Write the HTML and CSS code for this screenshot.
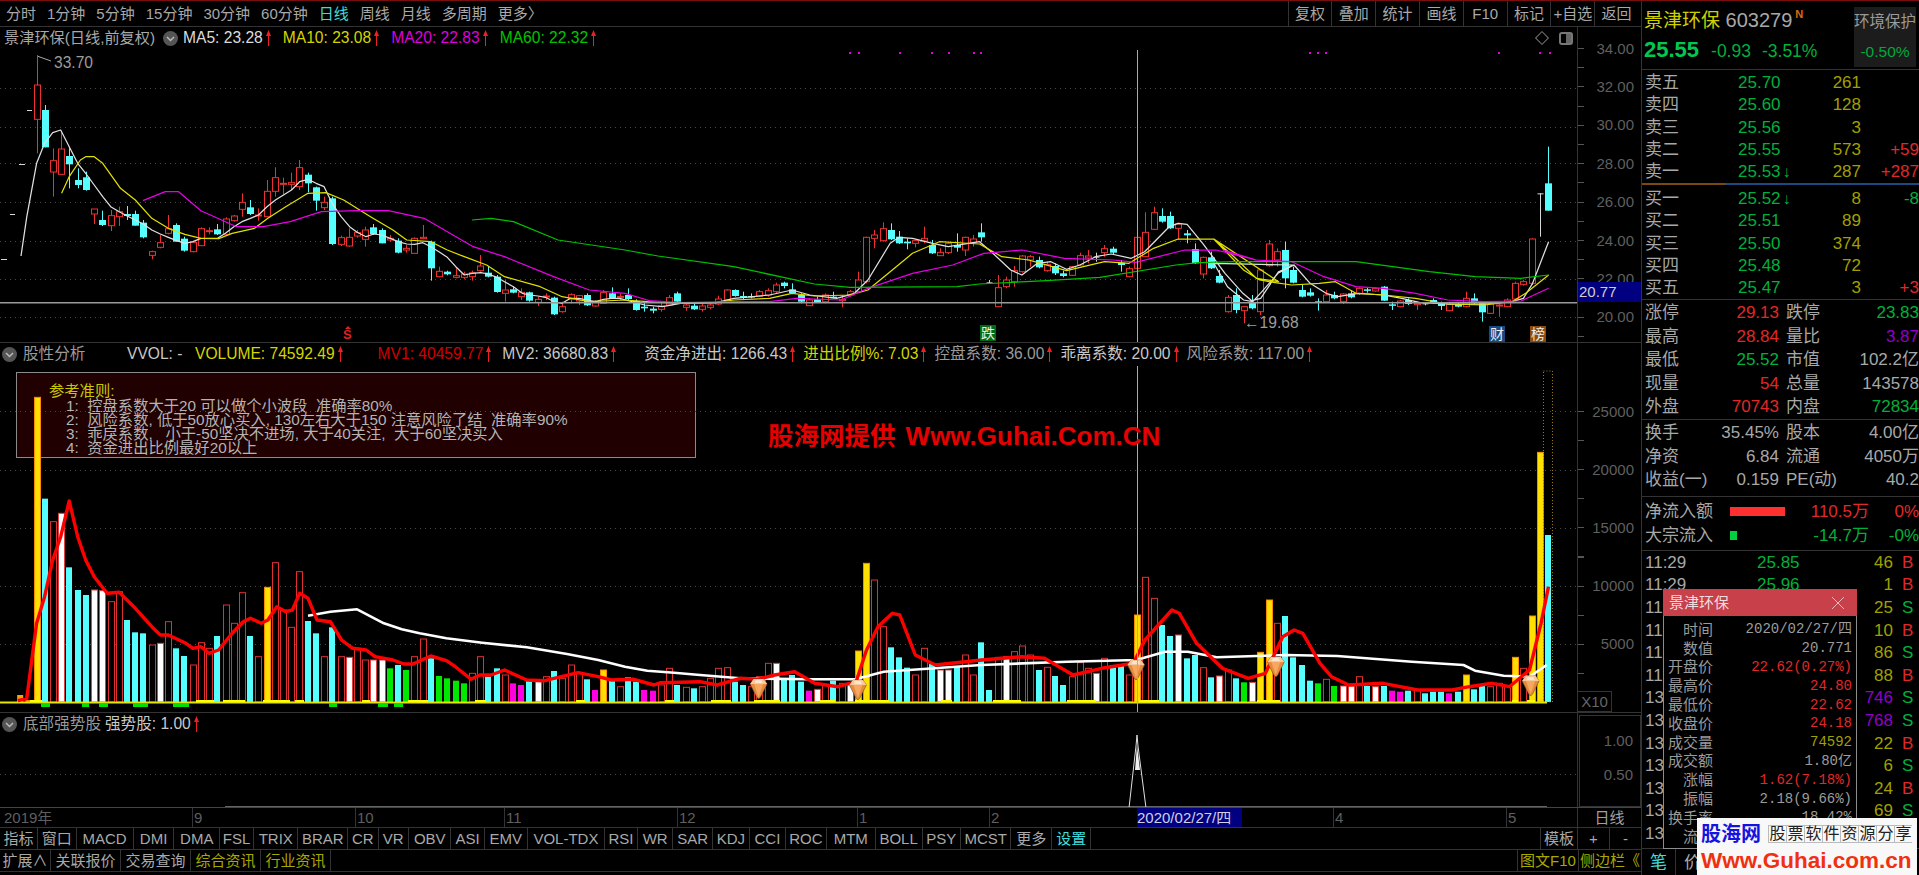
FILE: index.html
```html
<!DOCTYPE html>
<html lang="zh-CN">
<head>
<meta charset="utf-8">
<title>景津环保 603279</title>
<link rel="stylesheet" href="styles.css">
</head>
<body>
<svg class="defs" aria-hidden="true"><symbol id="up" viewBox="0 0 7 16"><path d="M3.5 0 6 6H4V16H3V6H1Z" fill="#f02020"/></symbol><symbol id="drop" viewBox="0 0 15 15"><circle cx="7.5" cy="7.5" r="7.5" fill="#555"/><path d="M4 6l3.5 3.5L11 6" fill="none" stroke="#bbb" stroke-width="1.5"/></symbol></svg>
<div class="app">
  <main class="left">
    <nav class="toolbar">
      <div class="periods">
        <span>分时</span><span>1分钟</span><span>5分钟</span><span>15分钟</span><span>30分钟</span><span>60分钟</span><span class="on">日线</span><span>周线</span><span>月线</span><span>多周期</span><span>更多〉</span>
      </div>
      <div class="actions">
        <span>复权</span><span>叠加</span><span>统计</span><span>画线</span><span>F10</span><span>标记</span><span>+自选</span><span>返回</span>
      </div>
    </nav>

    <section class="pane pane-price">
      <div class="plot" id="plot-price">
        <div class="legend">
          <span class="stock">景津环保(日线,前复权)</span>
          <svg class="drop"><use href="#drop"/></svg>
          <span class="white">MA5: 23.28</span><svg class="up"><use href="#up"/></svg>
          <span class="yellow gap">MA10: 23.08</span><svg class="up"><use href="#up"/></svg>
          <span class="magenta gap">MA20: 22.83</span><svg class="up"><use href="#up"/></svg>
          <span class="green gap">MA60: 22.32</span><svg class="up"><use href="#up"/></svg>
        </div>
        <svg class="chart"></svg>
        <span class="note note-high">33.70</span>
        <span class="note note-low">←19.68</span>
        <span class="mark-s">S</span>
        <span class="tag tag-die">跌</span>
        <span class="tag tag-cai">财</span>
        <span class="tag tag-bang">榜</span>
        <span class="corner-diamond"></span>
        <span class="corner-box"></span>
      </div>
      <div class="axis axis-price">
        <span>34.00</span><span>32.00</span><span>30.00</span><span>28.00</span><span>26.00</span><span>24.00</span><span>22.00</span><span>20.00</span>
        <b class="price-flag">20.77</b>
      </div>
    </section>

    <section class="pane pane-volume">
      <div class="plot" id="plot-volume">
        <div class="legend">
          <svg class="drop drop-first"><use href="#drop"/></svg>
          <span class="dim name">股性分析</span>
          <span class="light v1">VVOL: -</span>
          <span class="yellow v2">VOLUME: 74592.49</span><svg class="up"><use href="#up"/></svg>
          <span class="red v3">MV1: 40459.77</span><svg class="up"><use href="#up"/></svg>
          <span class="light v4">MV2: 36680.83</span><svg class="up"><use href="#up"/></svg>
          <span class="light v5">资金净进出: 1266.43</span><svg class="up"><use href="#up"/></svg>
          <span class="yellow v6">进出比例%: 7.03</span><svg class="up"><use href="#up"/></svg>
          <span class="dim v6">控盘系数: 36.00</span><svg class="up"><use href="#up"/></svg>
          <span class="light v6">乖离系数: 20.00</span><svg class="up"><use href="#up"/></svg>
          <span class="dim v6">风险系数: 117.00</span><svg class="up"><use href="#up"/></svg>
        </div>
        <div class="rules">
          <p class="rules-title">参考准则:</p>
          <p>1:&nbsp; 控盘系数大于20 可以做个小波段&nbsp; 准确率80%</p>
          <p>2:&nbsp; 风险系数, 低于50放心买入, 130左右大于150 注意风险了结&nbsp; 准确率90%</p>
          <p>3:&nbsp; 乖戾系数,&nbsp;&nbsp; 小于-50坚决不进场, 大于40关注,&nbsp; 大于60坚决买入</p>
          <p>4:&nbsp; 资金进出比例最好20以上</p>
        </div>
        <svg class="chart"></svg>
        <div class="stamp">股海网提供 <span>Www.Guhai.Com.CN</span></div>
      </div>
      <div class="axis axis-volume">
        <span>25000</span><span>20000</span><span>15000</span><span>10000</span><span>5000</span>
        <b class="scale-box">X10</b>
      </div>
    </section>

    <section class="pane pane-signal">
      <div class="plot" id="plot-signal">
        <div class="legend">
          <svg class="drop drop-first"><use href="#drop"/></svg>
          <span class="dim name">底部强势股</span>
          <span class="light s1">强势股: 1.00</span><svg class="up"><use href="#up"/></svg>
        </div>
        <svg class="chart"></svg>
      </div>
      <div class="axis axis-signal"><div class="signal-box"><span>1.00</span><span>0.50</span></div></div>
    </section>

    <div class="dates">
      <span>2019年</span><span>9</span><span>10</span><span>11</span><span>12</span><span>1</span><span>2</span><span class="date-now">2020/02/27/四</span><span class="blank"></span><span>4</span><span>5</span><span class="date-unit">日线</span>
    </div>

    <div class="tabs tabs-a">
      <div class="tab-list">
        <span>指标</span><span>窗口</span><span>MACD</span><span>DMI</span><span>DMA</span><span>FSL</span><span>TRIX</span><span>BRAR</span><span>CR</span><span>VR</span><span>OBV</span><span>ASI</span><span>EMV</span><span>VOL-TDX</span><span>RSI</span><span>WR</span><span>SAR</span><span>KDJ</span><span>CCI</span><span>ROC</span><span>MTM</span><span>BOLL</span><span>PSY</span><span>MCST</span><span>更多</span><span class="cyan">设置</span>
      </div>
      <div class="tab-end"><span class="cn">模板</span><span class="sq">+</span><span class="sq">-</span></div>
    </div>

    <div class="tabs tabs-b">
      <div class="tab-list">
        <span>扩展∧</span><span>关联报价</span><span>交易查询</span><span class="olive">综合资讯</span><span class="olive">行业资讯</span>
      </div>
      <div class="tab-end"><span class="olive narrow">图文F10</span><span class="olive narrow side">侧边栏《</span></div>
    </div>
  </main>

  <aside class="side-panel">
    <header class="quote">
      <div class="quote-main">
        <div class="quote-name"><span class="yellow-b">景津环保</span> <span class="code">603279</span><sup>N</sup></div>
        <div class="quote-price"><b>25.55</b><span>-0.93</span><span>-3.51%</span></div>
      </div>
      <div class="env"><span>环境保护</span><span class="env-val">-0.50%</span></div>
    </header>

    <div class="book">
      <div class="row"><span>卖五</span><span class="g">25.70</span><span class="o">261</span><span></span></div>
      <div class="row"><span>卖四</span><span class="g">25.60</span><span class="o">128</span><span></span></div>
      <div class="row"><span>卖三</span><span class="g">25.56</span><span class="o">3</span><span></span></div>
      <div class="row"><span>卖二</span><span class="g">25.55</span><span class="o">573</span><span class="r">+59</span></div>
      <div class="row"><span>卖一</span><span class="g">25.53<i>↓</i></span><span class="o">287</span><span class="r">+287</span></div>
    </div>
    <div class="split"><i></i><i></i></div>
    <div class="book">
      <div class="row"><span>买一</span><span class="g">25.52<i>↓</i></span><span class="o">8</span><span class="g">-8</span></div>
      <div class="row"><span>买二</span><span class="g">25.51</span><span class="o">89</span><span></span></div>
      <div class="row"><span>买三</span><span class="g">25.50</span><span class="o">374</span><span></span></div>
      <div class="row"><span>买四</span><span class="g">25.48</span><span class="o">72</span><span></span></div>
      <div class="row"><span>买五</span><span class="g">25.47</span><span class="o">3</span><span class="r">+3</span></div>
    </div>

    <div class="stats stats-a">
      <div class="stat"><span>涨停</span><span class="r">29.13</span><span>跌停</span><span class="g">23.83</span></div>
      <div class="stat"><span>最高</span><span class="r">28.84</span><span>量比</span><span class="p">3.87</span></div>
      <div class="stat"><span>最低</span><span class="g">25.52</span><span>市值</span><span>102.2亿</span></div>
      <div class="stat"><span>现量</span><span class="r">54</span><span>总量</span><span>143578</span></div>
      <div class="stat"><span>外盘</span><span class="r">70743</span><span>内盘</span><span class="g">72834</span></div>
    </div>
    <div class="stats stats-b">
      <div class="stat"><span>换手</span><span>35.45%</span><span>股本</span><span>4.00亿</span></div>
      <div class="stat"><span>净资</span><span>6.84</span><span>流通</span><span>4050万</span></div>
      <div class="stat"><span>收益(一)</span><span>0.159</span><span>PE(动)</span><span>40.2</span></div>
    </div>
    <div class="flows">
      <div class="flow"><span>净流入额</span><i class="bar bar-in"></i><span class="r">110.5万</span><span class="r">0%</span></div>
      <div class="flow"><span>大宗流入</span><i class="bar bar-out"></i><span class="g">-14.7万</span><span class="g">-0%</span></div>
    </div>
    <div class="ticks">
      <div class="tick"><span>11:29</span><span class="g">25.85</span><span class="o">46</span><span class="r">B</span></div>
      <div class="tick"><span>11:29</span><span class="g">25.96</span><span class="o">1</span><span class="r">B</span></div>
      <div class="tick"><span>11</span><span></span><span class="o">25</span><span class="g">S</span></div>
      <div class="tick"><span>11</span><span></span><span class="o">10</span><span class="r">B</span></div>
      <div class="tick"><span>11</span><span></span><span class="o">86</span><span class="g">S</span></div>
      <div class="tick"><span>11</span><span></span><span class="o">88</span><span class="r">B</span></div>
      <div class="tick"><span>13</span><span></span><span class="p">746</span><span class="g">S</span></div>
      <div class="tick"><span>13</span><span></span><span class="p">768</span><span class="g">S</span></div>
      <div class="tick"><span>13</span><span></span><span class="o">22</span><span class="r">B</span></div>
      <div class="tick"><span>13</span><span></span><span class="o">6</span><span class="g">S</span></div>
      <div class="tick"><span>13</span><span></span><span class="o">24</span><span class="r">B</span></div>
      <div class="tick"><span>13</span><span></span><span class="o">69</span><span class="g">S</span></div>
      <div class="tick"><span>13</span><span></span><span class="o"></span><span></span></div>
    </div>
    <div class="panel-tabs"><span class="cyan">笔</span><span>价</span></div>
  </aside>

  <div class="popup">
    <div class="popup-head"><span>景津环保</span><svg class="popup-x" viewBox="0 0 12 12"><path d="M0 0 12 12M12 0 0 12" stroke="#e9b9bd" stroke-width="1"/></svg></div>
    <dl class="popup-body">
      <div><dt>时间</dt><dd>2020/02/27/四</dd></div>
      <div><dt>数值</dt><dd>20.771</dd></div>
      <div><dt>开盘价</dt><dd class="r">22.62(0.27%)</dd></div>
      <div><dt>最高价</dt><dd class="r2">24.80</dd></div>
      <div><dt>最低价</dt><dd class="r2">22.62</dd></div>
      <div><dt>收盘价</dt><dd class="r2">24.18</dd></div>
      <div><dt>成交量</dt><dd class="o">74592</dd></div>
      <div><dt>成交额</dt><dd>1.80亿</dd></div>
      <div><dt>涨幅</dt><dd class="r2">1.62(7.18%)</dd></div>
      <div><dt>振幅</dt><dd>2.18(9.66%)</dd></div>
      <div><dt>换手率</dt><dd>18.42%</dd></div>
      <div><dt>流通</dt><dd></dd></div>
    </dl>
  </div>

  <div class="brand">
    <div class="brand-top"><span class="brand-name">股海网</span><span class="brand-cells"><i>股</i><i>票</i><i>软</i><i>件</i><i>资</i><i>源</i><i>分</i><i>享</i></span></div>
    <div class="brand-url">Www.Guhai.com.cn</div>
  </div>
</div>
<script src="app.js"></script>
</body>
</html>
```

FILE: styles.css
```css
* { box-sizing: border-box; }
html, body { margin: 0; height: 100%; background: #000; overflow: hidden; }
body { font: 15px/1 "Liberation Sans", "Noto Sans CJK SC", sans-serif; color: #a9a9a9; }
.defs { position: absolute; width: 0; height: 0; }
i { font-style: normal; }

.app { position: relative; display: grid; grid-template-columns: 1641px 278px; height: 875px; border-top: 1px solid #7a0d0d; }
.left { display: flex; flex-direction: column; min-width: 0; height: 874px; }

.toolbar { display: flex; justify-content: space-between; height: 26px; flex: none; border-bottom: 1px solid #333; }
.periods { display: flex; align-items: center; gap: 11px; padding-left: 6px; }
.periods .on { color: #3fdcdc; }
.actions { display: flex; align-items: stretch; padding-right: 3px; }
.actions span { display: flex; align-items: center; justify-content: center; width: 43.8px; border-left: 1px solid #333; white-space: nowrap; }

.pane { display: flex; flex: none; border-bottom: 1px solid #333; }
.pane-price { height: 316px; }
.pane-volume { height: 370px; }
.pane-signal { height: 95px; border-bottom: 1px solid #444; }

.plot { position: relative; width: 1577px; flex: none; overflow: hidden; }
.chart { position: absolute; inset: 0; width: 100%; height: 100%; display: block; }
.legend { position: relative; z-index: 2; display: flex; align-items: center; height: 22px; padding-left: 4px; font-size: 15.6px; white-space: nowrap; }
.pane-volume .legend, .pane-signal .legend { padding-left: 2px; }
.stock { width: 154px; font-size: 15.2px; }
.up { width: 7px; height: 16px; flex: none; margin-left: 2px; }
.drop { width: 15px; height: 15px; flex: none; margin: 0 5px; }
.drop-first { margin: 0 6px 0 0; }
.gap { margin-left: 11px; }
.name { width: 104px; }
.pane-signal .name { width: 82px; }
.v1 { width: 68px; }
.v3 { margin-left: 34px; }
.v4 { margin-left: 10px; }
.v5 { margin-left: 27px; }
.v6 { margin-left: 7px; }
.white { color: #dcdcdc; }
.light { color: #c8c8c8; }
.dim { color: #9a9a9a; }
.yellow { color: #d4d400; }
.magenta { color: #dc00dc; }
.green { color: #00c400; }
.red { color: #d00000; }

.note { position: absolute; z-index: 2; color: #9c9c9c; font-size: 15.6px; }
.note-high { left: 54px; top: 28px; }
.note-low { left: 1244px; top: 288px; }
.mark-s { position: absolute; z-index: 2; left: 343px; top: 302px; color: #e02020; font-size: 13px; line-height: 12px; font-weight: bold; }
.mark-s::before { content: ""; position: absolute; left: 2px; top: -3px; border: 3px solid transparent; border-top: 0; border-bottom: 3px solid #e02020; }
.tag { position: absolute; z-index: 2; width: 16px; height: 16px; color: #eee; font-size: 14px; line-height: 16px; text-align: center; }
.tag-die { left: 980px; top: 298px; background: #006b12; }
.tag-cai { left: 1489px; top: 299px; background: #164a80; }
.tag-bang { left: 1530px; top: 299px; background: #8a4a10; }
.corner-diamond { position: absolute; z-index: 2; left: 1537px; top: 6px; width: 10px; height: 10px; border: 1px solid #777; transform: rotate(45deg); }
.corner-box { position: absolute; z-index: 2; left: 1559px; top: 5px; width: 14px; height: 13px; border: 2px solid #777; border-radius: 3px; background: linear-gradient(90deg, #000 50%, #666 50%); }

.rules { position: absolute; left: 16px; top: 29px; width: 680px; height: 86px; padding: 11px 0 0 32px; background: #200000; border: 1px solid #8a8a8a; color: #b4b4b4; font-size: 15.3px; line-height: 14px; }
.rules p { margin: 0 0 0 17px; white-space: nowrap; }
.rules .rules-title { margin: 0 0 1px; color: #c8c800; }
.stamp { position: absolute; z-index: 3; left: 768px; top: 80px; color: #e60000; font-size: 25.5px; font-weight: bold; white-space: nowrap; }
.stamp span { margin-left: 3px; font-size: 26px; }

.axis { position: relative; width: 64px; flex: none; display: flex; flex-direction: column; border-left: 1px solid #333; color: #5f5f5f; font-size: 15px; }
.axis span { display: flex; align-items: center; justify-content: flex-end; padding-right: 7px; }
.axis-price { padding-top: 2px; background: repeating-linear-gradient(180deg, #555 0 1px, transparent 1px 19.2px) 0 20.5px / 6px 100% no-repeat; }
.axis-price span { height: 38.4px; }
.price-flag { position: absolute; left: 0; top: 255px; width: 63px; height: 20px; padding-left: 1px; background: #000080; color: #cfcfcf; font-weight: normal; line-height: 20px; }
.axis-volume { padding-top: 39px; background: repeating-linear-gradient(180deg, #555 0 1px, transparent 1px 29.1px) 0 67.5px / 6px 100% no-repeat; }
.axis-volume span { height: 58.2px; }
.scale-box { position: absolute; left: -1px; bottom: 0; width: 35px; height: 21px; background: #000; border: 1px solid #333; font-weight: normal; line-height: 19px; text-align: center; color: #666; }
.axis-signal { padding: 2px 0 0; }
.signal-box { height: 92px; padding-top: 7px; border: 1px solid #333; margin-left: 1px; }
.signal-box span { height: 34px; }

.dates { display: grid; grid-template-columns: 192px 163px 149px 173px 180px 132px 148px 105px 91px 173px 71px 64px; height: 20px; flex: none; border-bottom: 1px solid #333; color: #5f5f5f; font-size: 15px; line-height: 19px; }
.dates span { padding-left: 1px; border-left: 1px solid #333; white-space: nowrap; }
.dates span:first-child { padding-left: 4px; border: 0; }
.dates .date-now { padding: 0; background: #000080; color: #d0d0e8; border: 0; }
.dates .blank { border: 0; }
.dates .date-unit { padding: 0; text-align: center; color: #a0a0a0; }

.tabs { display: flex; justify-content: space-between; height: 22px; flex: none; border-bottom: 1px solid #333; white-space: nowrap; }
.tab-list, .tab-end { display: flex; }
.tabs-a .tab-list { display: grid; grid-template-columns: 38px 38.5px 57.2px 40.8px 45.5px 34px 44.5px 49.5px 30.6px 30.4px 42.5px 33.2px 43.3px 77px 33px 35.5px 39.3px 37.2px 36px 41px 48.7px 47px 38.3px 50.5px 40.5px 39.5px; }
.tab-list span, .tab-end span { display: flex; align-items: center; justify-content: center; border-right: 1px solid #333; }
.tab-end .cn { width: 38px; border-left: 1px solid #333; }
.tab-end .sq { width: 32px; }
.tab-end .sq:last-child { width: 31px; border-right: 0; }
.tabs-b .tab-list span { width: 70px; }
.tabs-b .tab-list span:first-child { width: 51px; }
.tabs-b .tab-end .narrow { width: 61px; border-left: 1px solid #333; border-right: 0; }
.tabs-b .tab-end .side { width: 63px; }
.cyan { color: #3fdcdc !important; }
.olive { color: #a8a800; }

.side-panel { display: flex; flex-direction: column; height: 874px; border-left: 1px solid #333; font-size: 17px; color: #a8a8a8; }
.r { color: #e02828; }
.r2 { color: #f02828; }
.g { color: #00b03c; }
.o { color: #a0a000; }
.p { color: #9000c8; }

.quote { display: flex; justify-content: space-between; height: 69px; flex: none; border-bottom: 1px solid #333; padding: 6px 3px 0 2px; }
.quote-main { display: flex; flex-direction: column; }
.quote-name { height: 26px; margin-top: 1px; white-space: nowrap; font-size: 20px; line-height: 24px; }
.yellow-b { color: #d0d000; font-size: 19px; }
.code { color: #a8a8a8; }
.quote-name sup { color: #d86a10; font-size: 11px; margin-left: 3px; vertical-align: 9px; line-height: 0; font-weight: bold; }
.quote-price { display: flex; align-items: baseline; gap: 11px; margin-top: 5px; color: #00b03c; font-size: 17.5px; }
.quote-price b { font-size: 22px; color: #00c850; margin-right: 1px; }
.env { display: flex; flex-direction: column; align-items: center; justify-content: space-between; width: 62px; height: 60px; padding: 7px 0 8px; background: #1c1c1c; font-size: 15.5px; color: #9a9a9a; }
.env-val { color: #00a83c; }

.book { display: flex; flex-direction: column; height: 113px; flex: none; padding-top: 1px; }
.row { display: grid; grid-template-columns: 93px 70px 53px 58px; align-items: center; height: 22.5px; padding-left: 3px; white-space: nowrap; }
.row > span:nth-child(3), .row > span:nth-child(4) { text-align: right; }
.row i { color: #00b03c; font-size: 16px; font-weight: bold; margin-left: 2px; }
.split { display: flex; height: 2px; flex: none; margin-bottom: 1px; }
.split i:first-child { width: 84px; background: #7a4a10; }
.split i:last-child { flex: 1; background: #1c4a80; }

.stats { flex: none; border-top: 1px solid #333; padding-top: 1px; }
.stats-a { height: 120px; }
.stats-b { height: 77px; }
.stat { display: grid; grid-template-columns: 50px 84px 1fr auto; height: 23.5px; align-items: center; padding-left: 3px; white-space: nowrap; }
.stat > span:nth-child(2) { text-align: right; }
.stat > span:nth-child(3) { padding-left: 7px; }

.flows { height: 54px; flex: none; border-top: 1px solid #333; padding-top: 2px; }
.flow { display: grid; grid-template-columns: 85px 60px 79px 50px; align-items: center; height: 24.5px; padding-left: 3px; white-space: nowrap; }
.flow > span:nth-child(3), .flow > span:nth-child(4) { text-align: right; }
.bar { display: block; height: 9px; }
.bar-in { width: 55px; background: #ff3030; }
.bar-out { width: 7px; background: #00d040; }

.ticks { height: 298px; flex: none; border-top: 1px solid #333; }
.tick { display: grid; grid-template-columns: 112px 60px 76px 16px; align-items: center; height: 22.6px; padding-left: 3px; white-space: nowrap; }
.tick > span:nth-child(3) { text-align: right; }
.tick > span:nth-child(4) { text-align: center; padding-left: 9px; }

.panel-tabs { display: flex; flex: 1; border-top: 1px solid #333; }
.panel-tabs span { display: flex; align-items: center; justify-content: center; width: 34px; border-right: 1px solid #333; }

.popup { position: absolute; z-index: 5; left: 1663px; top: 588px; width: 194px; height: 260px; background: #000; border: 1px solid #8c8c8c; border-top: 0; }
.popup-head { display: flex; align-items: center; justify-content: space-between; height: 27px; margin: 0 -1px; padding: 0 13px 0 6px; background: #c8404a; color: #f0dede; font-size: 15px; }
.popup-x { width: 12px; height: 12px; }
.popup-body { margin: 4px 0 0; }
.popup-body div { display: flex; height: 18.8px; align-items: center; justify-content: space-between; padding-right: 4px; }
.popup-body dt { width: 49px; text-align: right; white-space: nowrap; font-size: 15px; color: #9a9a9a; direction: rtl; }
.popup-body dd { margin: 0; font: 14px/1 "Liberation Mono", "Noto Sans CJK SC", monospace; white-space: nowrap; color: #9c9c9c; }
.popup-body dd.r, .popup-body dd.r2 { color: #e02828; }
.popup-body dd.o { color: #a0a000; }

.brand { position: absolute; z-index: 6; left: 1697px; top: 817px; width: 220px; height: 57px; padding: 6px 2px 0 4px; background: #f8f8f8; }
.brand-top { display: flex; align-items: center; height: 20px; }
.brand-name { width: 67px; color: #1414e0; font-size: 20px; font-weight: bold; }
.brand-cells { display: flex; }
.brand-cells i { width: 18px; height: 18px; border: 1px solid #bbb; border-right: 0; color: #222; font-size: 16px; line-height: 16px; text-align: center; }
.brand-url { margin-top: 4px; color: #f03010; font-size: 22.5px; font-weight: bold; line-height: 26px; white-space: nowrap; }
```

FILE: app.js
```js
(function () {
  var NS = 'http://www.w3.org/2000/svg';
  var X0 = 36.6, STEP = 8.214;
  function cx(i) { return X0 + STEP * i; }

  function add(svg, tag, attrs) {
    var el = document.createElementNS(NS, tag);
    for (var k in attrs) el.setAttribute(k, attrs[k]);
    svg.appendChild(el);
    return el;
  }

  function prepare(id) {
    var plot = document.getElementById(id);
    var svg = plot.querySelector('.chart');
    var r = plot.getBoundingClientRect();
    svg.setAttribute('viewBox', r.left + ' ' + r.top + ' ' + r.width + ' ' + r.height);
    return svg;
  }

  function grid(svg, ys) {
    ys.forEach(function (y) {
      add(svg, 'line', { x1: 0, x2: 1577, y1: y + 0.5, y2: y + 0.5, stroke: '#4a4a4a', 'stroke-dasharray': '1 4' });
    });
  }

  function crosshair(svg, y1, y2) {
    add(svg, 'line', { x1: 1137.5, x2: 1137.5, y1: y1, y2: y2, stroke: '#aaaaaa' });
  }

  function pts(list, fx, fy) {
    var out = [];
    for (var i = 0; i < list.length; i += 2) out.push(fx(list[i]).toFixed(1) + ',' + fy(list[i + 1]).toFixed(1));
    return out.join(' ');
  }

  var z1x = function (x) { return x / 2.24; }, z1y = function (y) { return y / 3; };
  var z9x = function (x) { return 600 + x / 2.24; }, z9y = function (y) { return 30 + y / 3; };
  var z2x = function (x) { return 1200 + x / 2.18; };
  var z5y = function (y) { return 340 + y / 3; };
  var z8x = function (x) { return 700 + x / 1.742; };

  /* candles: type, body top, body bottom, wick top, wick bottom (crop units) */
  var CANDLES_A = [
    ['r',255,358,165,460],['c',330,442,315,442],['r',482,516,445,590],['r',447,523,395,523],['c',468,493,440,565],
    ['c',540,555,505,565],['c',532,570,515,572],['r',627,642,627,672],['c',660,675,632,678],['r',647,677,630,693],
    ['r',635,650,620,678],['c',642,648,618,660],['c',642,677,632,677],['c',668,712,660,715],['r',755,766,752,778],
    ['r',728,742,705,745],['r',686,700,645,703],['c',675,725,670,725],['c',716,752,710,755],['r',727,755,725,757],
    ['r',686,737,682,737],['r',692,694,682,703],['c',688,703,672,705],['r',657,703,652,708],['r',648,662,645,665],
    ['r',607,628,580,650],['c',622,642,600,645],['r',645,648,625,662],['r',574,650,540,652],['r',533,574,502,590],
    ['r',550,553,533,583],['r',548,553,518,570],['r',503,560,480,570],['c',524,550,518,577],['c',562,602,560,632],
    ['r',607,623,590,630],['c',595,732,590,735],['r',713,733,707,738],['r',712,738,685,740],['r',698,708,690,713],
    ['r',690,718,680,740],['c',682,702,672,705],['c',690,730,685,730],['r',715,720,705,725],['c',722,758,715,760],
    ['r',745,750,735,758],['r',715,760,712,760],['r',712,716,675,718],['c',725,805,722,842],['r',814,830,800,832],
    ['c',815,823,812,826],['r',827,832,805,835],['r',822,832,815,838],['r',818,830,812,842],['r',798,812,765,815],
    ['c',818,830,798,832],['c',830,876,825,878],['r',870,880,840,905],['c',868,878,860,880],['r',877,890,865,900],
    ['c',877,902,875,905],['r',898,907,890,918],['r',888,890,880,900],['c',893,943,890,945],['r',920,935,905,938],
    ['r',884,897,880,910],['r',887,903,885,915],['c',885,916,880,918],['r',907,918,900,920],['r',878,910,870,912],
    ['c',880,895,862,897],['r',889,892,880,900],['c',885,897,865,900],['c',903,930,898,932],['c',920,925,905,935],
    ['c',926,932,920,940],['r',918,928,905,935],['r',893,915,885,918],['c',880,905,875,910],['r',915,922,910,932],
    ['c',917,928,912,930]
  ];
  var CANDLES_B = [
    ['r',828,838,820,845],['r',825,832,818,838],['r',807,822,797,825],['r',780,810,778,812],['c',780,798,778,800],
    ['c',798,803,785,808],['c',798,800,790,805],['r',785,798,780,800],['r',782,795,775,800],['r',765,785,758,790],
    ['c',758,768,755,775],['c',778,790,760,792],['c',795,815,790,820],['r',810,827,805,828],['c',808,816,800,818],
    ['r',795,815,790,820],['c',800,803,785,805],['r',808,812,795,832],['r',785,795,780,800],['r',750,785,725,788],
    ['r',622,755,620,760],['r',615,625,600,655],['r',596,632,577,635],['c',600,628,580,630],['c',620,640,603,642],
    ['c',635,640,625,658],['r',632,640,630,652],['r',625,633,590,640],['c',645,670,630,672],['r',667,677,655,678],
    ['r',640,668,635,672],['c',645,653,610,665],['r',622,660,620,678],['r',627,637,615,650],['c',607,622,580,635],
    ['w',757,759,750,762],['r',773,830,735,830],['r',750,770,740,775],['r',722,755,708,770],['r',678,725,675,728],
    ['r',680,690,675,710],['c',690,712,680,715],['r',703,722,695,725],['c',708,730,700,735],['c',730,738,722,742],
    ['r',710,736,708,738],['r',677,705,668,708],['r',678,684,660,700],['w',680,682,668,695],['r',656,668,645,680],
    ['c',656,668,650,672],['c',698,705,690,725],['r',716,740,710,742],['r',622,715,590,718],['r',607,680,547,682],
    ['r',548,598,530,600],['c',558,575,535,578],['c',558,595,545,597],['r',582,595,578,628],['c',610,616,600,640],
    ['c',657,700,640,702]
  ];
  var CANDLES_C = [
    ['r',772,822,770,835],['c',772,805,755,807],['c',828,848,810,850],['r',892,935,885,938],['c',885,930,865,940],
    ['r',920,932,918,970],['c',908,925,885,928],['r',810,935,810,945],['r',732,797,720,800],['r',755,780,745,800],
    ['c',750,835,725,865],['c',810,848,800,850],['c',870,890,855,892],['c',877,887,865,890],['c',904,906,895,932],
    ['r',885,905,870,907],['c',885,895,875,898],['r',882,905,880,912],['c',880,892,870,895],['r',865,880,862,885],
    ['c',868,872,862,878],['r',865,873,862,875],['c',860,902,858,903],['c',913,915,905,930],['r',903,920,900,922],
    ['c',900,912,895,915],['r',910,914,905,930],['w',910,914,908,916],['c',900,908,895,912],['c',908,918,905,930],
    ['r',912,932,905,934],['c',912,920,908,922],['r',895,920,875,922],['c',895,910,880,912],['c',908,937,905,965],
    ['r',912,940,905,942],['r',915,917,905,950],['r',900,920,895,922],['r',850,897,845,900],['r',845,853,840,857],
    ['r',717,850,715,855],['w',580,582,580,710],['c',550,632,440,632]
  ];
  var CANDLE_COLOR = { r: '#ef3030', c: '#55ffff', w: '#d8d8d8' };

  function drawCandle(svg, i, c, off) {
    var x = Math.round(cx(i)) + 0.5, top = c[1] + off, bot = c[2] + off, hi = c[3] + off, lo = c[4] + off;
    var col = CANDLE_COLOR[c[0]];
    var line = function (a, b) { add(svg, 'line', { x1: x, x2: x, y1: a / 3, y2: b / 3, stroke: col }); };
    line(hi, lo);
    if (c[0] === 'r') {
      add(svg, 'rect', { x: x - 3, y: top / 3, width: 6, height: Math.max((bot - top) / 3, 1), fill: '#000', stroke: col });
    } else if (c[0] === 'c') {
      add(svg, 'rect', { x: x - 3.5, y: top / 3, width: 7, height: Math.max((bot - top) / 3, 1.5), fill: col });
    } else {
      add(svg, 'rect', { x: x - 3, y: top / 3, width: 6, height: 1, fill: col });
    }
  }

  var VOL_A = 'y172 c476 r545 w520 c682 c750 c765 w750 w752 r785 r755 c840 c877 c880 r915 w910 r845 c925 c948 r975 r908 r925 c888 r795 r850 r758 c888 r950 y742 r668 r810 r862 r695 c843 c880 r950 c862 r950 w952 r925 r960 w960 w960 g985 c975 g990 r950 r897 c955 g1008 g1015 g1022 g1030 r1000 r950 c1010 c985 r1005 m1030 m1035 c1020 w1025 r1010 c993 r1015 r975 r1000 c1018 m1050 y990 c1020 r1040 c1012 c1025 m1050 m1052 r1035 r985 c1035 r1042 c1045';
  var VOL_B = 'r1040 r1015 r985 r983 c1025 c1035 r1040 r1010 r970 w970 c1015 c1005 c1025 m1052 w1048 r1035 c1022 r1030 w1030 y933 y670 r720 r860 c922 c952 c983 r1005 r925 c970 w990 w990 c980 r945 r1005 c907 c1050 r952 w950 r935 r918 r945 c990 r982 c1008 c1035 r1010 r968 r985 w1000 r955 c975 c975 r1005 y825 r712 r775 c855 c888 w885 c955 c945 r983 c1012 w1008 r990 c1015 g1027 w1027 y937 y780 r850 c828 c952 c975 c1022 g1030 r1018 g1038 w1038 w1038 r1010 c1038 w1040 c1038 m1052 m1055 c1052 r1050 c1060 c1055 c1055 m1060 c1055 y1005 c1048 c1035 r1040 r1030 r1038 y952 r985 y828 y337 c585';
  var BAR_FILL = { r: '#000', c: '#55ffff', w: '#ffffff', y: '#ffe000', g: '#00e800', m: '#ff00e0' };
  var BAR_STROKE = { r: '#e03030', w: '#e04040', y: '#ff8a00' };

  function drawBars(svg) {
    var BASE = 702;
    var list = (VOL_A + ' ' + VOL_B).split(' ');
    list.forEach(function (v, i) {
      var t = v.charAt(0), top = z5y(+v.slice(1));
      var x = Math.round(cx(i));
      var attrs = { x: x - 3, y: top, width: 6, height: BASE - top, fill: BAR_FILL[t] };
      if (BAR_STROKE[t]) { attrs.stroke = BAR_STROKE[t]; attrs.x = x - 2.5; attrs.width = 6; }
      add(svg, 'rect', attrs);
    });
    /* dotted limit bar above the last session */
    add(svg, 'rect', { x: cx(184) - 4.5, y: z5y(93), width: 9, height: BASE - z5y(93), fill: 'none', stroke: '#a08000', 'stroke-dasharray': '1 2' });
    /* small bars before the first session */
    add(svg, 'rect', { x: cx(-2) - 3, y: 695, width: 6, height: 7, fill: '#ffa000' });
    add(svg, 'rect', { x: cx(-1) - 3, y: 700, width: 6, height: 2, fill: '#ff8000' });
    /* base line */
    add(svg, 'rect', { x: 0, y: 701.5, width: 1547, height: 2, fill: '#e6e600' });
    [[41, 50], [82, 89], [99, 108], [133, 148], [173, 189], [329, 337], [378, 388], [394, 403]].forEach(function (g) {
      add(svg, 'rect', { x: g[0], y: 703, width: g[1] - g[0], height: 4, fill: '#00e000' });
    });
    [[30, 42], [196, 214], [223, 245], [263, 290], [295, 304], [362, 370], [408, 428], [475, 486], [576, 585], [665, 674], [711, 731], [754, 780], [820, 835], [855, 889], [941, 952], [993, 1021], [1067, 1096], [1139, 1159], [1257, 1280], [1512, 1518], [1527, 1535]].forEach(function (g) {
      add(svg, 'rect', { x: g[0], y: 700, width: g[1] - g[0], height: 2, fill: '#ffff00' });
    });
  }

  function gem(svg, x, y) {
    var g = add(svg, 'g', { transform: 'translate(' + x + ' ' + y + ')' });
    add(g, 'polygon', { points: '-8.5,-5 -5,-10 5,-10 8.5,-5 2,8 0,10 -2,8', fill: '#e88a3c', stroke: '#6a4a30', 'stroke-width': 0.6 });
    add(g, 'polygon', { points: '-8.5,-5 -5,-10 5,-10 8.5,-5', fill: '#f8c89a' });
    add(g, 'polygon', { points: '-4.5,-5 4.5,-5 0,8', fill: '#f6a860' });
    add(g, 'polygon', { points: '-3,-9 3,-9 4,-6 -4,-6', fill: '#fde6cf' });
  }

  /* price pane */
  (function () {
    var svg = prepare('plot-price');
    grid(svg, [88, 127, 163, 202, 241, 279, 317]);
    [[27, 110, 5], [19, 164, 6], [10, 214, 5], [1, 259, 6]].forEach(function (d) {
      add(svg, 'rect', { x: d[0], y: d[1], width: d[2], height: 1, fill: '#d8d8d8' });
    });
    add(svg, 'line', { x1: 37, x2: 51, y1: 56, y2: 61, stroke: '#aaa' });
    CANDLES_A.forEach(function (c, i) { drawCandle(svg, i, c, 0); });
    CANDLES_B.forEach(function (c, i) { drawCandle(svg, i + 81, c, 90); });
    CANDLES_C.forEach(function (c, i) { drawCandle(svg, i + 142, c, 0); });

    function line(parts, color) {
      var p = pts(parts[0], z1x, z1y) + ' ' + pts(parts[1], z9x, z9y) + ' ' + pts(parts[2], z2x, z1y);
      add(svg, 'polyline', { points: p, fill: 'none', stroke: color, 'stroke-width': 1.25, 'stroke-linejoin': 'round' });
    }
    line([[47,768,60,650,82,490,100,430,118,398,136,390,155,440,174,490,192,520,211,555,230,590,248,620,267,635,285,648,303,660,321,672,340,690,359,702,377,712,396,722,414,730,432,725,450,715,468,715,488,714,505,700,524,680,542,665,561,655,579,645,598,620,617,600,635,585,653,570,671,545,690,538,708,550,726,560,744,610,764,650,783,680,800,697,820,710,837,702,855,705,874,715,892,725,911,732,929,733,947,728,965,740,985,757,1002,772,1021,800,1040,825,1058,820,1077,818,1094,822,1113,832,1130,845,1150,860,1170,880,1186,885,1205,888,1222,892,1241,905,1259,910,1278,895,1297,895,1315,900,1334,905,1352,898,1370,895,1388,895],
          [100,825,140,830,180,820,260,818,300,805,380,795,430,780,470,795,530,805,570,790,600,750,650,640,670,622,700,625,745,640,780,650,850,635,880,670,920,720,945,735,980,700,1010,695,1045,718,1075,705,1110,680,1145,672,1190,685,1220,665,1275,590,1295,580,1315,583,1350,640,1400,730,1440,790,1460,812,1480,805,1520,725,1553,705],
          [30,790,60,860,95,900,115,905,135,875,170,820,205,795,240,850,275,880,300,890,345,880,400,885,440,895,480,908,540,912,620,912,680,905,705,895,725,850,760,725]], '#e0e0e0');
    line([[138,580,155,530,180,480,192,470,211,470,230,490,270,565,303,600,340,655,377,685,414,703,450,715,490,716,520,700,570,685,600,655,640,620,690,580,730,578,770,600,830,650,880,690,911,720,965,725,1002,750,1040,770,1090,795,1130,830,1210,860,1259,890,1320,905,1400,900,1450,905],
          [100,815,180,820,260,818,300,810,380,805,430,790,480,798,560,795,600,780,650,725,700,670,760,635,850,642,900,680,960,690,1045,722,1130,695,1185,700,1240,655,1295,627,1375,627,1420,680,1470,745,1520,755],
          [30,717,60,760,95,810,130,840,160,847,200,855,260,850,295,845,340,880,400,885,470,895,540,912,620,915,680,905,710,880,760,825]], '#e0e000');
    line([[320,602,370,575,400,575,450,632,530,680,590,680,650,665,720,635,800,632,870,632,950,655,1060,740,1130,770,1240,830,1320,870,1400,880,1450,900],
          [110,812,180,818,300,815,380,815,440,805,540,810,600,775,700,730,790,705,860,670,945,660,1040,685,1150,690,1200,697,1310,660,1380,660,1470,690],
          [50,750,120,780,200,785,270,830,340,860,400,865,470,880,540,900,620,905,700,903,760,865]], '#e800e8');
    line([[1057,660,1100,655,1150,665,1250,720,1400,750],
          [130,678,300,710,480,762,560,772,800,770,850,762,1000,752,1120,742,1290,705,1340,698],
          [80,785,340,785,500,815,600,830,700,835,760,825]], '#00c000');

    [849, 858, 899, 931, 948, 973, 980, 1309, 1317, 1325, 1498, 1539, 1549].forEach(function (x) {
      add(svg, 'rect', { x: x, y: 52, width: 2, height: 2, fill: '#e000e0' });
    });
    add(svg, 'rect', { x: 0, y: 302, width: 1577, height: 1.5, fill: '#9a9a9a' });
    crosshair(svg, 50, 343);
  })();

  /* volume pane */
  (function () {
    var svg = prepare('plot-volume');
    grid(svg, [411, 470, 528, 586, 644]);
    drawBars(svg);
    var white = pts([690,827,740,815,800,808,860,850,900,868,940,880,1000,895,1080,908,1180,922,1270,942,1340,960,1400,980,1450,992,1510,998,1568,1005], z1x, z5y) + ' ' +
      pts([70,1015,190,1018,270,1018,320,995,490,975,640,965,760,960,810,935,850,935,900,952,1020,945,1110,948,1240,965,1330,975,1350,992,1400,1007,1445,1010,1475,975], z8x, z5y);
    add(svg, 'polyline', { points: white, fill: 'none', stroke: '#fff', 'stroke-width': 2.6, 'stroke-linejoin': 'round' });
    var red = pts([40,1082,60,1075,82,850,100,770,118,660,136,590,155,483,174,590,192,660,211,710,240,760,267,757,303,805,340,860,359,885,377,885,414,908,432,925,450,920,468,940,490,930,520,880,545,845,561,835,585,850,600,840,620,800,640,815,655,810,671,760,690,775,710,840,740,845,765,900,790,925,820,930,840,950,880,960,905,972,925,972,965,948,1000,962,1020,980,1055,1018,1075,1005,1100,1005,1130,990,1180,1020,1220,1022,1295,998,1340,1010,1370,1020,1420,1018,1465,1035,1480,1028,1568,1025], z1x, z5y) + ' ' +
      pts([30,1035,70,1015,100,1018,130,1005,165,995,200,1030,240,1040,272,1025,290,930,310,860,335,820,348,825,375,945,410,975,490,960,560,950,600,955,650,1005,700,985,755,970,775,900,822,810,835,820,865,910,910,985,955,1015,985,1000,1015,890,1035,870,1050,880,1080,970,1100,1010,1130,1035,1190,1030,1250,1050,1310,1050,1340,1040,1380,1030,1410,1040,1445,990,1465,850,1478,740], z8x, z5y);
    add(svg, 'polyline', { points: red, fill: 'none', stroke: '#ff0000', 'stroke-width': 3.4, 'stroke-linejoin': 'round' });
    [[758.6, 689], [857.9, 690], [1136, 670], [1275.8, 667], [1530.6, 686]].forEach(function (g) { gem(svg, g[0], g[1]); });
    crosshair(svg, 366, 713);
  })();

  /* signal pane */
  (function () {
    var svg = prepare('plot-signal');
    grid(svg, [774]);
    add(svg, 'rect', { x: 225, y: 806.5, width: 1322, height: 2, fill: '#c8c8c8' });
    add(svg, 'polyline', { points: '1129,808 1136,746 1137,735 1138,746 1146,808', fill: 'none', stroke: '#e0e0e0' });
    add(svg, 'polygon', { points: '1135,770 1137,745 1140,770', fill: '#f0f0f0' });
  })();
})();
```
